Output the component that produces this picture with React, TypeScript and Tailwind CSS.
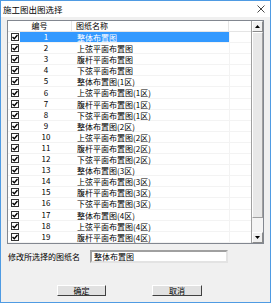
import React from "react";

const names = [
  "整体布置图",
  "上弦平面布置图",
  "腹杆平面布置图",
  "下弦平面布置图",
  "整体布置图(1区)",
  "上弦平面布置图(1区)",
  "腹杆平面布置图(1区)",
  "下弦平面布置图(1区)",
  "整体布置图(2区)",
  "上弦平面布置图(2区)",
  "腹杆平面布置图(2区)",
  "下弦平面布置图(2区)",
  "整体布置图(3区)",
  "上弦平面布置图(3区)",
  "腹杆平面布置图(3区)",
  "下弦平面布置图(3区)",
  "整体布置图(4区)",
  "上弦平面布置图(4区)",
  "腹杆平面布置图(4区)",
];

function Check() {
  return (
    <div className="flex h-[8px] w-[8px] items-center justify-center border border-[#333] bg-white">
      <svg width="6" height="6" viewBox="0 0 6 6">
        <path d="M0.5 3 L2.3 4.8 L5.5 1" stroke="#000" strokeWidth="1.4" fill="none" />
      </svg>
    </div>
  );
}

function Arrow({ down }: { down?: boolean }) {
  return (
    <svg width="5" height="3" viewBox="0 0 5 3">
      <path d={down ? "M0 0 H5 L2.5 3 Z" : "M0 3 H5 L2.5 0 Z"} fill="#000" />
    </svg>
  );
}

function Row({ n, name, selected }: { n: number; name: string; selected?: boolean }) {
  return (
    <div className="flex h-[11.1px] items-center border-b border-[#f3f3f3]">
      <div className="flex w-[12px] items-center pl-[3px]">
        <Check />
      </div>
      <div className={selected ? "flex h-full w-[209px] items-center bg-[#3399ff] text-white" : "flex h-full w-[209px] items-center"}>
        <div className="w-[52px] text-center">{n}</div>
        <div className="h-full w-[157px] whitespace-nowrap pl-[5px] leading-[11px]">{name}</div>
      </div>
      <div className="h-full w-[22px] border-l border-[#f3f3f3]" />
    </div>
  );
}

export default function App() {
  return (
    <div className="flex h-[303px] w-[271px] flex-col overflow-hidden border border-[#4f9be3] bg-[#f0f0f0] font-['Noto_Sans_CJK_SC',sans-serif] text-[8px] leading-none text-black">
      {/* title bar */}
      <div className="flex h-[16px] items-center justify-between bg-white pl-[2px] pr-[5px]">
        <span className="text-[8.5px]">施工图出图选择</span>
        <svg width="8" height="8" viewBox="0 0 8 8">
          <path d="M0.5 0.5 L7.5 7.5 M7.5 0.5 L0.5 7.5" stroke="#333" strokeWidth="0.9" />
        </svg>
      </div>

      <div className="flex flex-1 flex-col px-[6px] pt-[3px]">
        {/* list view */}
        <div className="flex h-[224px] border border-[#828790] bg-white">
          <div className="flex w-[243px] flex-col">
            <div className="flex h-[11px] items-center border-b border-[#e5e5e5]">
              <div className="h-full w-[64px] border-r border-[#e5e5e5] text-center leading-[10px]">编号</div>
              <div className="h-full w-[157px] border-r border-[#e5e5e5] pl-[4px] leading-[10px]">图纸名称</div>
              <div className="h-full flex-1" />
            </div>
            {names.map((name, i) => (
              <Row key={i} n={i + 1} name={name} selected={i === 0} />
            ))}
          </div>

          {/* scrollbar */}
          <div className="flex w-[12px] flex-col border-l border-[#a0a0a0] bg-[#f4f4f4]">
            <div className="flex h-[11px] items-center justify-center border border-b-[#8a8a8a] border-l-white border-r-[#8a8a8a] border-t-white bg-[#f0f0f0]">
              <Arrow />
            </div>
            <div className="h-[186px] border border-b-[#a0a0a0] border-l-white border-r-[#a0a0a0] border-t-white bg-[#e8e8e8]" />
            <div className="flex-1" />
            <div className="flex h-[11px] items-center justify-center border border-b-[#8a8a8a] border-l-white border-r-[#8a8a8a] border-t-white bg-[#f0f0f0]">
              <Arrow down />
            </div>
          </div>
        </div>

        {/* rename row */}
        <div className="mt-[6px] flex h-[13px] items-center">
          <div className="w-[83px] pl-[1px]">修改所选择的图纸名</div>
          <div className="flex h-full w-[138px] items-center border-2 border-b-[#e3e3e3] border-l-[#a0a0a0] border-r-[#e3e3e3] border-t-[#a0a0a0] bg-white pl-[2px]">
            整体布置图
          </div>
        </div>

        {/* buttons */}
        <div className="mt-[22px] flex pl-[50px]">
          <button className="flex h-[11px] w-[49px] items-center justify-center border border-b-[#404040] border-l-white border-r-[#404040] border-t-white bg-[#e1e1e1] text-[8px] leading-none">
            确定
          </button>
          <button className="ml-[46px] flex h-[11px] w-[50px] items-center justify-center border border-b-[#404040] border-l-white border-r-[#404040] border-t-white bg-[#e1e1e1] text-[8px] leading-none">
            取消
          </button>
        </div>
      </div>
    </div>
  );
}
